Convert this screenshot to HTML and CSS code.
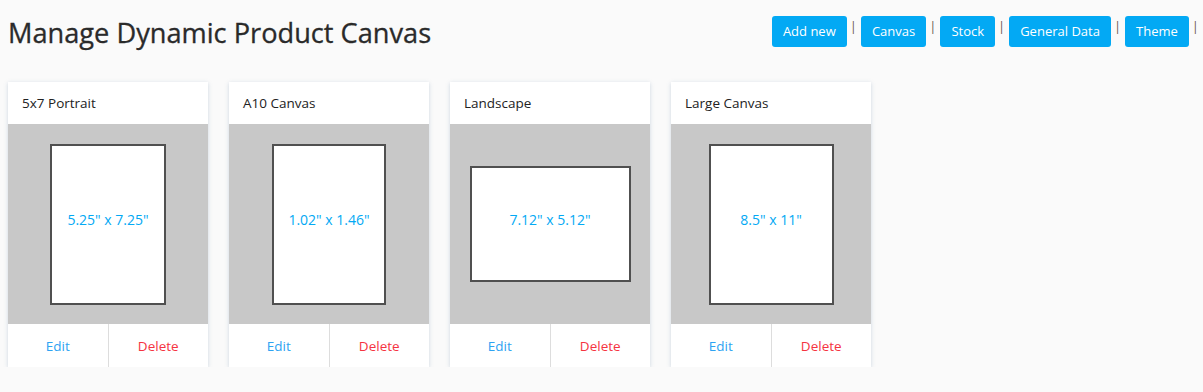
FILE: index.html
```html
<!DOCTYPE html>
<html lang="en">
<head>
<meta charset="UTF-8">
<title>Manage Dynamic Product Canvas</title>
<link rel="stylesheet" href="styles.css">
</head>
<body>
<div class="topbar">
    <h1>Manage Dynamic Product Canvas</h1>
    <div class="actions">
        <button class="btn">Add new</button><span class="sep">|</span>
        <button class="btn">Canvas</button><span class="sep">|</span>
        <button class="btn">Stock</button><span class="sep">|</span>
        <button class="btn">General Data</button><span class="sep">|</span>
        <button class="btn">Theme</button><span class="sep">|</span>
    </div>
</div>
<div class="cards">
    <div class="card">
        <div class="card-title">5x7 Portrait</div>
        <div class="preview"><div class="sheet" style="width:116px;height:161px">5.25" x 7.25"</div></div>
        <div class="card-actions"><a class="edit">Edit</a><a class="delete">Delete</a></div>
    </div>
    <div class="card">
        <div class="card-title">A10 Canvas</div>
        <div class="preview"><div class="sheet" style="width:114px;height:161px">1.02" x 1.46"</div></div>
        <div class="card-actions"><a class="edit">Edit</a><a class="delete">Delete</a></div>
    </div>
    <div class="card">
        <div class="card-title">Landscape</div>
        <div class="preview"><div class="sheet" style="width:161px;height:116px">7.12" x 5.12"</div></div>
        <div class="card-actions"><a class="edit">Edit</a><a class="delete">Delete</a></div>
    </div>
    <div class="card">
        <div class="card-title">Large Canvas</div>
        <div class="preview"><div class="sheet" style="width:125px;height:161px">8.5" x 11"</div></div>
        <div class="card-actions"><a class="edit">Edit</a><a class="delete">Delete</a></div>
    </div>
</div>
</body>
</html>
```

FILE: styles.css
```css
* { margin:0; padding:0; box-sizing:border-box; }
body {
    font-family: 'Open Sans', 'Noto Sans', sans-serif;
    background: #fafafa;
    color: #333;
    padding: 0 0 0 8px;
}
.topbar {
    display: flex;
    justify-content: space-between;
    align-items: center;
    height: 64px;
    padding-top: 1px;
}
h1 {
    font-size: 27.2px;
    font-weight: 400;
    color: #2a2a2a;
    -webkit-text-stroke: 0.3px #2a2a2a;
}
.actions {
    display: flex;
    align-items: center;
    margin-top: -3px;
}
.btn {
    font-family: inherit;
    background: #03a9f4;
    color: #fff;
    border: none;
    border-radius: 3px;
    height: 31px;
    padding: 0 11px;
    font-size: 13px;
    cursor: pointer;
}
.sep {
    color: #6e5a50;
    font-size: 13px;
    margin: -10px 4px 0 3px;
}
.cards {
    display: flex;
    gap: 21px;
    margin-top: 18px;
}
.card {
    width: 200px;
    background: #fff;
    box-shadow: 0 1px 4px rgba(120,150,180,0.35);
}
.card-title {
    height: 42px;
    padding: 0 14px;
    display: flex;
    align-items: center;
    font-size: 13.5px;
    color: #222;
}
.preview {
    height: 200px;
    background: #c8c8c8;
    display: flex;
    align-items: center;
    justify-content: center;
}
.sheet {
    background: #fff;
    border: 2px solid #505050;
    display: flex;
    align-items: center;
    justify-content: center;
    padding-bottom: 10px;
    color: #03a9f4;
    font-size: 14px;
}
.card-actions {
    display: flex;
    height: 43px;
}
.card-actions a {
    flex: 1;
    display: flex;
    align-items: center;
    justify-content: center;
    font-size: 13.5px;
    cursor: pointer;
}
.card-actions .edit { color: #2ea3f2; border-right: 1px solid #ddd; }
.card-actions .delete { color: #f5333f; }
```
